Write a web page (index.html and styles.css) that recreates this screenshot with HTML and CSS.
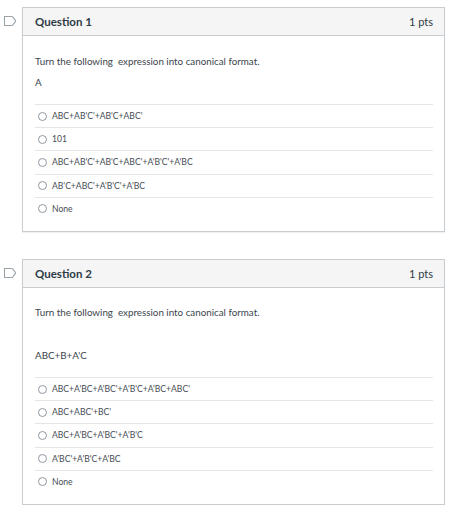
FILE: index.html
```html
<!DOCTYPE html>
<html>
<head>
<meta charset="utf-8">
<link rel="stylesheet" href="styles.css">
</head>
<body>
<div class="quiz">
  <div class="question-row q1">
    <div class="flag">
      <svg width="14" height="12" viewBox="0 0 14 12"><path d="M1.5 1.5 H8.5 Q9.3 1.5 9.9 2.2 L12.3 5.3 Q12.7 6 12.3 6.7 L9.9 9.8 Q9.3 10.5 8.5 10.5 H1.5 Z" fill="none" stroke="#9aa3aa" stroke-width="1.1" stroke-linejoin="round"/></svg>
    </div>
    <div class="card">
      <div class="card-header">
        <span class="title">Question 1</span>
        <span class="pts">1 pts</span>
      </div>
      <div class="card-body">
        <p class="text">Turn the following&nbsp; expression into canonical format.</p>
        <p class="text second">A</p>
        <ul class="answers">
          <li><span class="radio"></span>ABC+AB'C'+AB'C+ABC'</li>
          <li><span class="radio"></span>101</li>
          <li><span class="radio"></span>ABC+AB'C'+AB'C+ABC'+A'B'C'+A'BC</li>
          <li><span class="radio"></span>AB'C+ABC'+A'B'C'+A'BC</li>
          <li><span class="radio"></span>None</li>
        </ul>
      </div>
    </div>
  </div>

  <div class="question-row q2">
    <div class="flag">
      <svg width="14" height="12" viewBox="0 0 14 12"><path d="M1.5 1.5 H8.5 Q9.3 1.5 9.9 2.2 L12.3 5.3 Q12.7 6 12.3 6.7 L9.9 9.8 Q9.3 10.5 8.5 10.5 H1.5 Z" fill="none" stroke="#9aa3aa" stroke-width="1.1" stroke-linejoin="round"/></svg>
    </div>
    <div class="card">
      <div class="card-header">
        <span class="title">Question 2</span>
        <span class="pts">1 pts</span>
      </div>
      <div class="card-body">
        <p class="text">Turn the following&nbsp; expression into canonical format.</p>
        <p class="text spaced">ABC+B+A'C</p>
        <ul class="answers">
          <li><span class="radio"></span>ABC+A'BC+A'BC'+A'B'C+A'BC+ABC'</li>
          <li><span class="radio"></span>ABC+ABC'+BC'</li>
          <li><span class="radio"></span>ABC+A'BC+A'BC'+A'B'C</li>
          <li><span class="radio"></span>A'BC'+A'B'C+A'BC</li>
          <li><span class="radio"></span>None</li>
        </ul>
      </div>
    </div>
  </div>
</div>
</body>
</html>
```
FILE: styles.css
```css
html, body {
  margin: 0;
  padding: 0;
  background: #ffffff;
}
body {
  font-family: Lato, "Open Sans", "Liberation Sans", sans-serif;
  color: #2d3b45;
}
.quiz {
  padding-top: 7px;
  display: flex;
  flex-direction: column;
  gap: 27px;
}
.question-row {
  display: flex;
  align-items: flex-start;
}
.flag {
  width: 22px;
  height: 28px;
  display: flex;
  align-items: center;
  padding-left: 3px;
  box-sizing: border-box;
}
.flag svg {
  display: block;
}
.card {
  width: 423px;
  box-sizing: border-box;
  border: 1px solid #c7cdd1;
  box-shadow: 0 1px 1px rgba(0,0,0,0.06);
}
.card-header {
  height: 27px;
  background: #f5f5f5;
  border-bottom: 1px solid #c7cdd1;
  display: flex;
  align-items: center;
  justify-content: space-between;
  padding: 0 11px 0 12px;
}
.title {
  font-weight: 700;
  font-size: 11.5px;
  color: #2d3b45;
}
.pts {
  font-size: 11px;
  color: #2d3b45;
}
.card-body {
  padding: 18px 11px 11px 12px;
}
.text {
  margin: 0;
  font-size: 9.8px;
  line-height: 14px;
  color: #3b454d;
}
.q2 .card-body {
  padding-top: 17px;
}
.second {
  margin-top: 7px;
}
.spaced {
  margin-top: 29px;
}
.answers {
  list-style: none;
  margin: 15px 0 0 0;
  padding: 0;
}
.answers li {
  border-top: 1px solid #e3e6e8;
  height: 22.2px;
  display: flex;
  align-items: center;
  font-size: 8.6px;
  color: #454d54;
  padding-left: 3px;
}
.radio {
  width: 7px;
  height: 7px;
  border: 1px solid #8f989e;
  border-radius: 50%;
  margin-right: 5px;
  flex: none;
  background: #fff;
}
```
